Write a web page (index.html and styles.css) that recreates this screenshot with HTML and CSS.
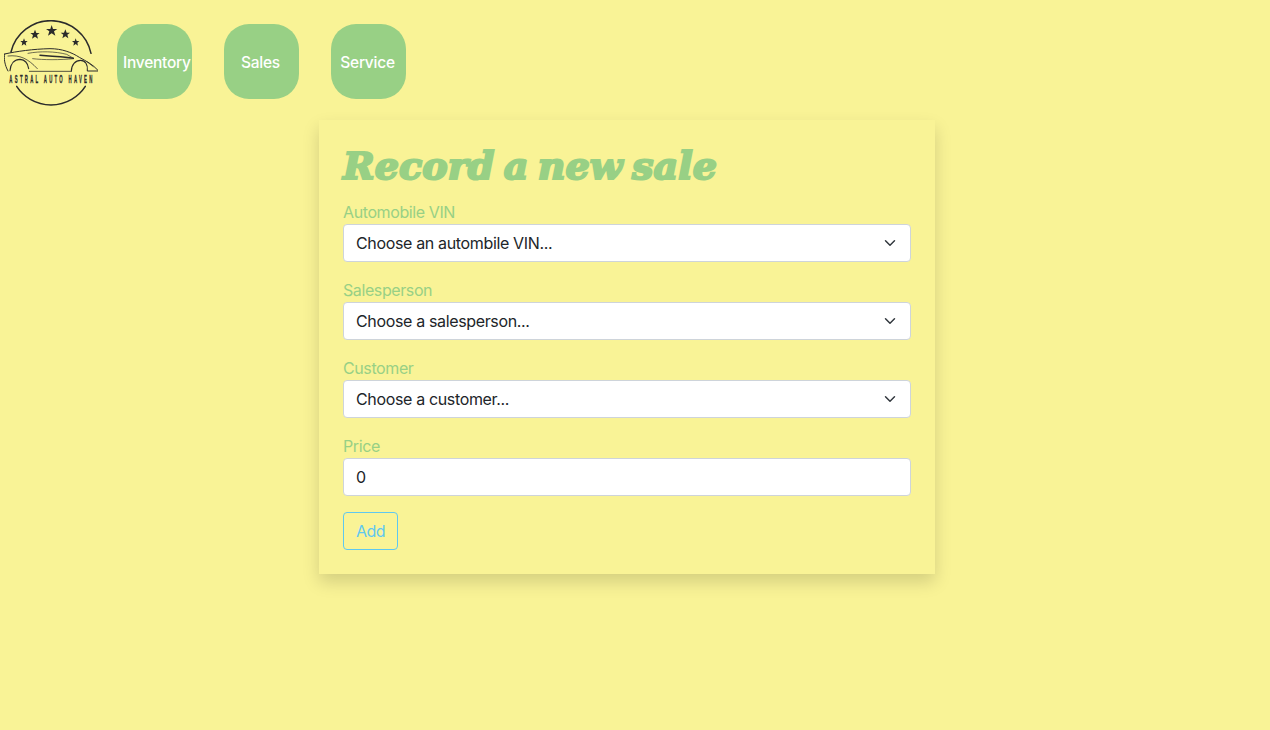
FILE: index.html
```html
<!DOCTYPE html>
<html lang="en">
<head>
<meta charset="utf-8">
<title>Astral Auto Haven</title>
<link rel="stylesheet" href="styles.css">
</head>
<body>
<nav class="nav">
  <svg class="logo" viewBox="12 30 282 258" aria-label="Astral Auto Haven">
    <g fill="none" stroke="#2b2b2b" stroke-width="4.5" stroke-linecap="round">
      <path d="M33 126A123 123 0 0 1 273 130"/>
      <path d="M50 229A123 123 0 0 0 256 229"/>
    </g>
    <g fill="#2b2b2b">
      <polygon points="72,85 75,93 83,93 77,98 79,107 72,102 65,107 67,98 61,93 69,93"/>
      <polygon points="105,59 109,69 119,69 111,75 114,86 105,80 96,86 99,75 91,69 101,69"/>
      <polygon points="155,45 159,57 172,57 162,64 166,77 155,70 144,77 148,64 138,57 151,57"/>
      <polygon points="196,58 200,68 210,68 202,74 205,85 196,79 187,85 190,74 182,68 192,68"/>
      <polygon points="227,85 230,93 238,93 232,98 234,107 227,102 220,107 222,98 216,93 224,93"/>
    </g>
    <g fill="none" stroke="#2b2b2b" stroke-linecap="round" stroke-linejoin="round">
      <path stroke-width="3" d="M14 132C50 124 100 117 150 116C185 116 215 127 238 142C258 153 278 163 293 180"/>
      <path stroke-width="3" d="M14 132C11 145 14 165 24 183"/>
      <path stroke-width="3.4" d="M30 182C32 160 44 148 60 148C76 149 84 162 86 176"/>
      <path stroke-width="3.4" d="M214 184C214 164 226 151 242 151C256 151 264 164 262 182"/>
      <path stroke-width="2.4" d="M88 184H212"/>
      <path stroke-width="3.4" d="M264 183H295"/>
      <path stroke-width="2.2" d="M24 138C60 134 84 146 112 176"/>
      <path stroke-width="2" d="M84 130C120 123 165 124 200 133L222 146C180 150 130 150 98 146"/>
      <path stroke-width="4.5" d="M120 136C150 138 185 140 220 145"/>
      <path stroke-width="2.2" d="M262 156L280 170"/>
    </g>
    <text class="logo-text" transform="translate(28 220) scale(.72 1.75)">ASTRAL AUTO HAVEN</text>
  </svg>
  <a class="nav-btn" href="#">Inventory</a>
  <a class="nav-btn" href="#">Sales</a>
  <a class="nav-btn" href="#">Service</a>
</nav>
<main class="card">
  <h1 class="title">Record a new sale</h1>
  <form>
    <div class="field">
      <label class="label" for="vin">Automobile VIN</label>
      <select class="control select" id="vin"><option>Choose an autombile VIN...</option></select>
    </div>
    <div class="field">
      <label class="label" for="person">Salesperson</label>
      <select class="control select" id="person"><option>Choose a salesperson...</option></select>
    </div>
    <div class="field">
      <label class="label" for="customer">Customer</label>
      <select class="control select" id="customer"><option>Choose a customer...</option></select>
    </div>
    <div class="field">
      <label class="label" for="price">Price</label>
      <input class="control" id="price" type="text" value="0">
    </div>
    <button class="add" type="button">Add</button>
  </form>
</main>
</body>
</html>
```
FILE: styles.css
```css
* { box-sizing: border-box; }
html, body { height: 100%; }
body {
  margin: 0;
  background: #f9f396;
  font-family: Inter, "Liberation Sans", sans-serif;
  font-size: 16px;
  line-height: 24px;
  color: #212529;
  overflow: hidden;
}
.nav {
  display: flex;
  align-items: flex-start;
  height: 120px;
  padding: 20px 0 0 4px;
}
.logo {
  width: 94px;
  height: 86px;
  flex: none;
  margin-right: 19px;
}
.logo-text {
  font-family: "Liberation Sans", sans-serif;
  font-size: 18px;
  font-weight: 700;
  letter-spacing: 9.5px;
  fill: #2b2b2b;
  stroke: #2b2b2b;
  stroke-width: 0.5px;
}
.nav-btn {
  display: block;
  flex: none;
  width: 75px;
  height: 75px;
  margin: 4px 32px 0 0;
  padding: 2px 8px 0 6px;
  border-radius: 25px;
  background: #98d085;
  color: #fff;
  font-size: 15.5px;
  font-weight: 500;
  line-height: 73px;
  letter-spacing: -0.25px;
  text-align: center;
  white-space: nowrap;
  text-decoration: none;
}
.card {
  width: 616px;
  margin-left: 319px;
  padding: 24px;
  background: #f9f396;
  box-shadow: 0 8px 16px rgba(0, 0, 0, 0.15);
}
.title {
  margin: 0 0 8px;
  height: 48px;
  font-family: "DejaVu Serif", serif;
  font-size: 38px;
  line-height: 44px;
  font-style: italic;
  font-weight: 700;
  color: #98d085;
  -webkit-text-stroke: 2.2px #98d085;
  letter-spacing: 0.1px;
  word-spacing: -4px;
  white-space: nowrap;
}
.field { margin-bottom: 16px; }
.label {
  display: block;
  color: #98d085;
  font-size: 16px;
  letter-spacing: -0.4px;
}
.control {
  display: block;
  width: 100%;
  height: 38px;
  padding: 6px 12px;
  border: 1px solid #ced4da;
  border-radius: 4px;
  background-color: #fff;
  color: #212529;
  font: inherit;
  letter-spacing: -0.35px;
  appearance: none;
  -webkit-appearance: none;
}
.select {
  padding-right: 36px;
  background-image: url("data:image/svg+xml,%3csvg xmlns='http://www.w3.org/2000/svg' viewBox='0 0 16 16'%3e%3cpath fill='none' stroke='%23343a40' stroke-linecap='round' stroke-linejoin='round' stroke-width='2' d='M2 5l6 6 6-6'/%3e%3c/svg%3e");
  background-repeat: no-repeat;
  background-position: right 12px center;
  background-size: 16px 12px;
}
.add {
  display: block;
  height: 38px;
  padding: 6px 12px;
  border: 1px solid #5fc8f0;
  border-radius: 4px;
  background: transparent;
  color: #5fc8f0;
  font: inherit;
  letter-spacing: -0.5px;
}
```
